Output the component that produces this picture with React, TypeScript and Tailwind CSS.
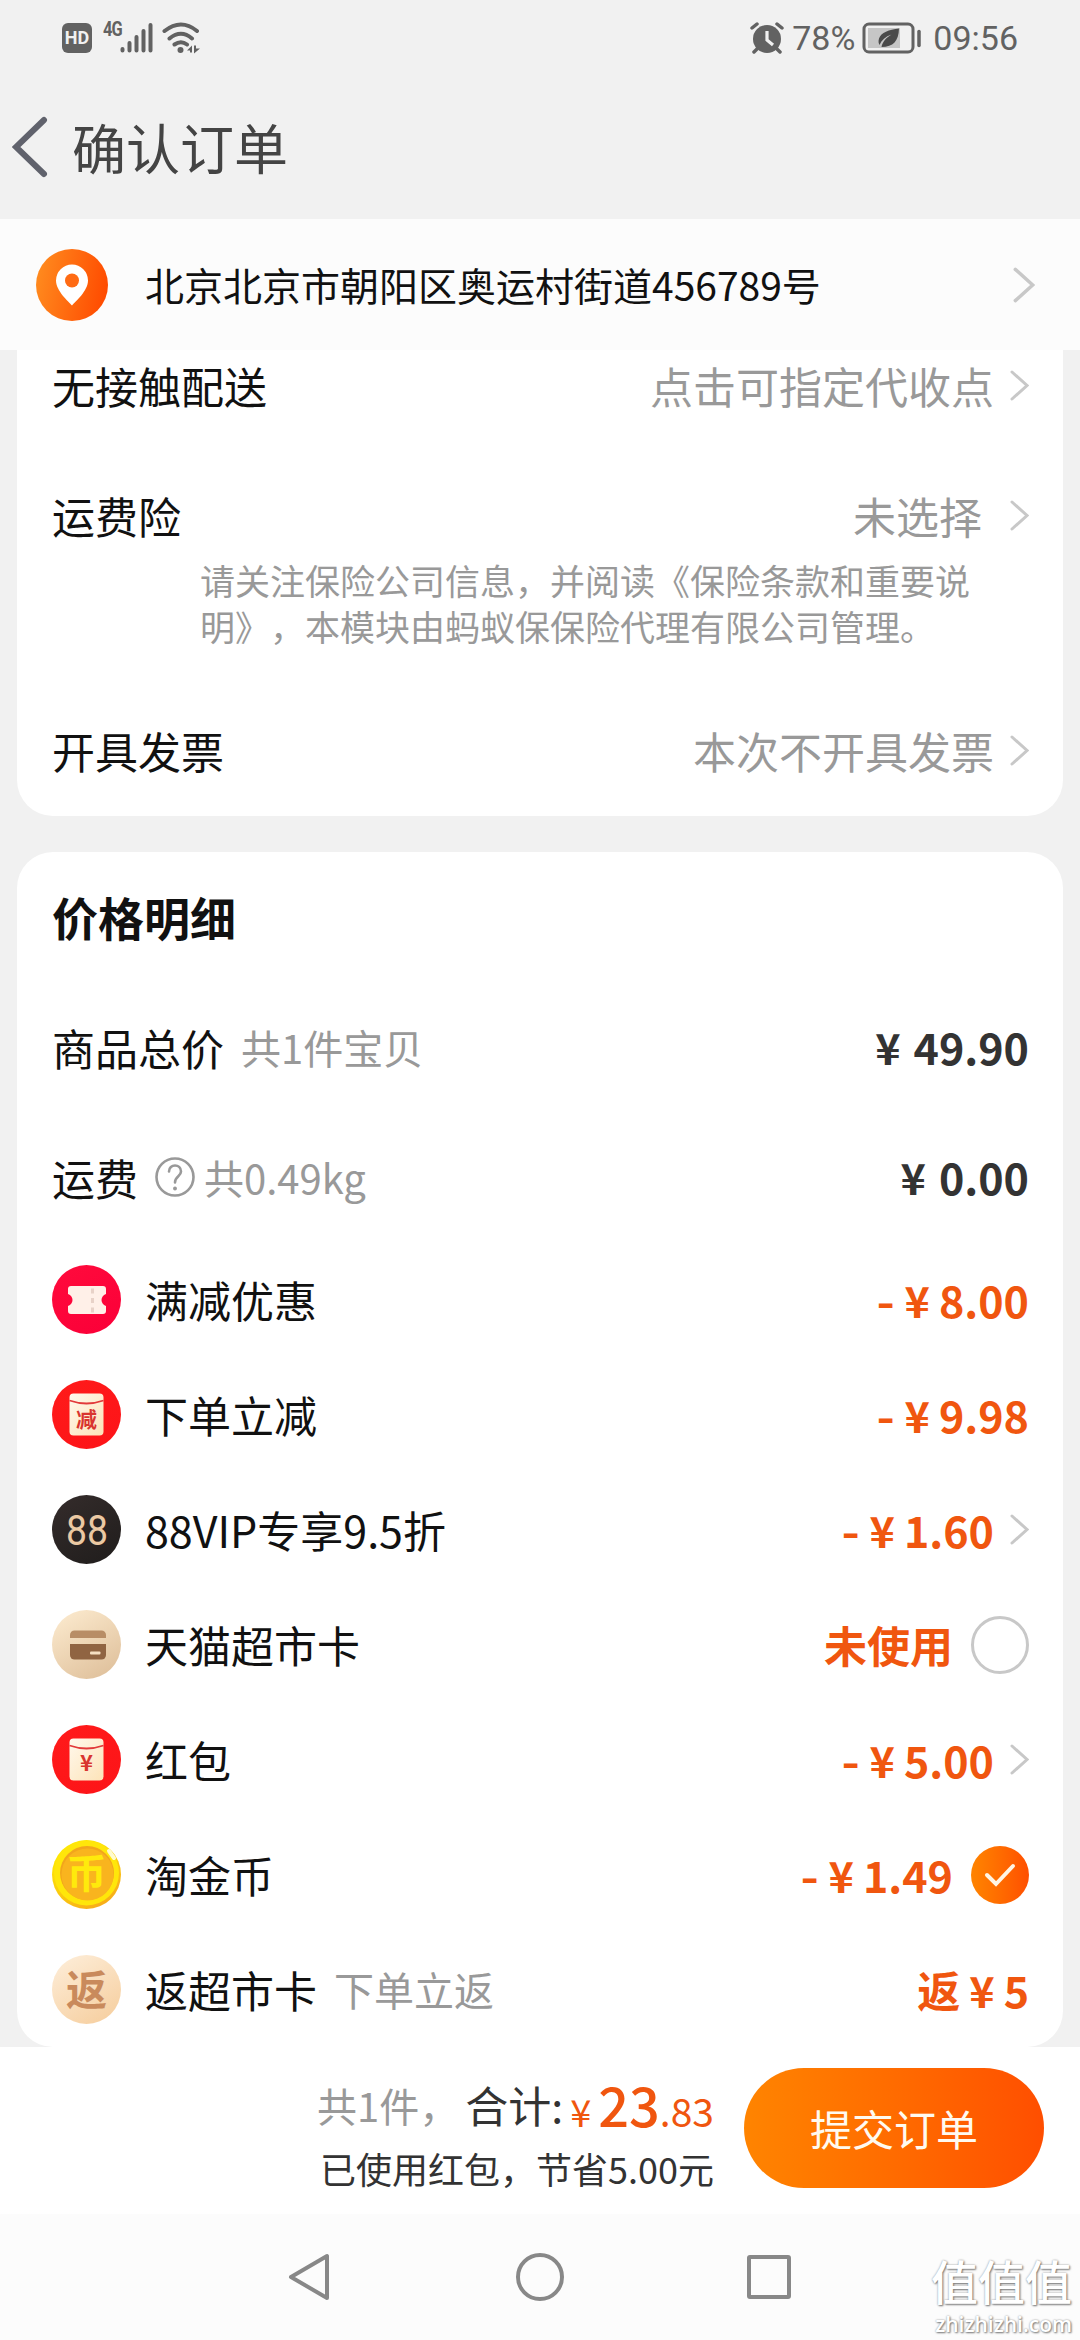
import type { ReactNode } from "react"

interface PriceRow {
  icon: ReactNode
  label: string
  note?: string
  prefix?: string
  amount?: string
  text?: string
  trailing?: "arrow" | "empty" | "checked"
}

function Arrow({ big }: { big?: boolean }) {
  return (
    <svg className={big ? "h-[36px] w-[22px]" : "h-[31px] w-[19px]"} viewBox="0 0 19 31" fill="none" stroke="#c8c8c8" strokeWidth="3" strokeLinecap="round">
      <path d="M2 2 L17 15.5 L2 29" strokeLinejoin="miter" />
    </svg>
  )
}

function Disc({ id, from, to, children }: { id: string; from: string; to: string; children: ReactNode }) {
  return (
    <svg className="h-[69px] w-[69px] shrink-0" viewBox="0 0 69 69">
      <defs>
        <linearGradient id={id} x1="0.2" y1="0" x2="0.8" y2="1">
          <stop offset="0" stopColor={from} />
          <stop offset="1" stopColor={to} />
        </linearGradient>
      </defs>
      <circle cx="34.5" cy="34.5" r="34.5" fill={`url(#${id})`} />
      {children}
    </svg>
  )
}

function CouponIcon() {
  return (
    <Disc id="coupon" from="#ff0a3c" to="#fb0038">
      <path d="M19 21H51a3 3 0 0 1 3 3v5c-6 2-6 10 0 12v5a3 3 0 0 1-3 3H19a3 3 0 0 1-3-3v-5c6-2 6-10 0-12v-5a3 3 0 0 1 3-3z" fill="#fff0e8" />
      <path d="M40.500 23.500v24" stroke="#e8d2c8" strokeWidth="3" strokeDasharray="5 4.500" />
    </Disc>
  )
}

function EnvelopeIcon({ id, mark, size, y }: { id: string; mark: string; size: number; y: number }) {
  return (
    <Disc id={id} from="#ff1a1a" to="#fd1418">
      <defs>
        <linearGradient id={`${id}-paper`} x1="0" y1="0" x2="1" y2="1">
          <stop offset="0" stopColor="#fff8ec" />
          <stop offset="1" stopColor="#fde3b8" />
        </linearGradient>
      </defs>
      <rect x="17.500" y="13.500" width="34" height="42" rx="4" fill={`url(#${id}-paper)`} />
      <path d="M17.500 20.500Q34.500 26.500 51.500 20.500" stroke="#e2393a" strokeWidth="1.800" fill="none" />
      <text x="34.500" y={y} fontSize={size} fontWeight="700" textAnchor="middle" fill="#d9352f">{mark}</text>
    </Disc>
  )
}

function VipIcon() {
  return (
    <Disc id="vip" from="#332b2a" to="#211e1d">
      <text x="35" y="49.500" fontSize="42" textAnchor="middle" textLength="42" lengthAdjust="spacingAndGlyphs" fill="#ebc9a3" className="font-['Roboto',sans-serif]">88</text>
    </Disc>
  )
}

function CardIcon() {
  return (
    <Disc id="card" from="#fbe9cd" to="#dfc09b">
      <path d="M18 28v-3a4.500 4.500 0 0 1 4.500-4.500h27a4.500 4.500 0 0 1 4.500 4.500v3z" fill="#b88d66" />
      <path d="M18 34h36v11a4.500 4.500 0 0 1-4.500 4.500h-27a4.500 4.500 0 0 1-4.500-4.500z" fill="#906442" />
      <rect x="38" y="41.500" width="10.500" height="3" rx="1" fill="#f6dfc2" />
    </Disc>
  )
}

function CoinIcon() {
  return (
    <Disc id="coin" from="#fff000" to="#f7a81c">
      <circle cx="34.500" cy="33" r="32.500" fill="#ffe60a" />
      <circle cx="35" cy="33" r="27" fill="#f2a51c" />
      <circle cx="35.500" cy="34.500" r="26" fill="#f9b41e" />
      <text x="34.500" y="48" fontSize="40" fontWeight="700" textAnchor="middle" fill="#ffea0c">币</text>
      <path d="M57 11l5 7" stroke="#fffbd0" strokeWidth="4" strokeLinecap="round" />
    </Disc>
  )
}

function RebateIcon() {
  return (
    <Disc id="rebate" from="#fdecd6" to="#f6cfa0">
      <text x="34.500" y="49.500" fontSize="41" fontWeight="700" textAnchor="middle" fill="#c98a5c">返</text>
    </Disc>
  )
}

const rows: PriceRow[] = [
  { icon: <CouponIcon />, label: "满减优惠", prefix: "-", amount: "8.00" },
  { icon: <EnvelopeIcon id="cut" mark="减" size={21} y={46.5} />, label: "下单立减", prefix: "-", amount: "9.98" },
  { icon: <VipIcon />, label: "88VIP专享9.5折", prefix: "-", amount: "1.60", trailing: "arrow" },
  { icon: <CardIcon />, label: "天猫超市卡", text: "未使用", trailing: "empty" },
  { icon: <EnvelopeIcon id="red" mark="¥" size={22} y={46} />, label: "红包", prefix: "-", amount: "5.00", trailing: "arrow" },
  { icon: <CoinIcon />, label: "淘金币", prefix: "-", amount: "1.49", trailing: "checked" },
  { icon: <RebateIcon />, label: "返超市卡", note: "下单立返", prefix: "返", amount: "5" },
]

function Amount({ prefix, value }: { prefix?: string; value: string }) {
  return (
    <span className="flex items-center pb-[1px] font-bold">
      {prefix && <span className={prefix === "-" ? "mr-[10px] origin-right scale-x-[1.15]" : "mr-[9px]"}>{prefix}</span>}
      <span className={prefix ? "mr-[9px]" : "mr-[13px]"}>¥</span>
      <span>{value}</span>
    </span>
  )
}

function Trailing({ kind }: { kind?: PriceRow["trailing"] }) {
  if (kind === "arrow") return <span className="ml-[16px] flex"><Arrow /></span>
  if (kind === "empty") return <span className="ml-[18px] h-[58px] w-[58px] rounded-full border-[3px] border-[#c8c8c8]" />
  if (kind === "checked")
    return (
      <span className="ml-[18px] flex h-[58px] w-[58px] items-center justify-center rounded-full bg-gradient-to-r from-[#ff8400] to-[#ff4e00]">
        <svg className="h-[24px] w-[32px]" viewBox="0 0 32 24" fill="none" stroke="#fff5e4" strokeWidth="4" strokeLinecap="round">
          <path d="M3 12l9 9L29 3" />
        </svg>
      </span>
    )
  return null
}

function OptionRow({ label, value, inset }: { label: string; value: string; inset?: boolean }) {
  return (
    <div className="flex h-[60px] items-center justify-between">
      <span>{label}</span>
      <span className="flex items-center text-[#999]">
        <span className={inset ? "mr-[28px]" : "mr-[16px]"}>{value}</span>
        <Arrow />
      </span>
    </div>
  )
}

function StatusBar() {
  return (
    <div className="flex h-[76px] items-center justify-between pl-[62px] pr-[62px] text-[#626262]">
      <div className="flex items-center">
        <span className="flex h-[30px] w-[30px] items-center justify-center rounded-[6px] bg-[#626262] font-['Roboto',sans-serif] text-[18px] font-bold leading-none text-[#f1f1f1]">HD</span>
        <span className="ml-[11px] w-[17px] origin-left scale-x-[0.82] self-start font-['Roboto',sans-serif] text-[20px] font-bold leading-[14px] tracking-[-1px]">4G</span>
        <svg className="h-[32px] w-[34px]" viewBox="0 0 34 32" stroke="#626262" strokeWidth="4" strokeLinecap="round">
          <path d="M2.500 27v1.500M9.500 21v7.500M16.500 15v13.500M23.500 9v19.500M30.500 3v25.500" />
        </svg>
        <svg className="ml-[8px] h-[32px] w-[40px]" viewBox="0 0 40 32" fill="none" stroke="#626262" strokeWidth="4" strokeLinecap="round">
          <path d="M2.500 9Q19 -4 35 9M7.500 16.500Q19 7 30 16.500M12.500 22.500Q19 18 25 22.500" />
          <circle cx="18.500" cy="28" r="3" fill="#626262" stroke="none" />
          <path d="M25 28.500l5-5v7h-2v-2zM32 31.500v-8h2v3h4z" fill="#626262" stroke="none" />
        </svg>
      </div>
      <div className="flex items-center font-['Roboto',sans-serif] text-[34px] leading-none">
        <svg className="h-[32px] w-[34px]" viewBox="0 0 34 32">
          <circle cx="17" cy="17" r="14" fill="#626262" />
          <path d="M2 6l5-4M32 6l-5-4M7 27l-3 3M27 27l3 3" stroke="#626262" strokeWidth="3.500" strokeLinecap="round" />
          <path d="M17 9v9l6 5" stroke="#f1f1f1" strokeWidth="3.200" fill="none" />
        </svg>
        <span className="ml-[8px]">78%</span>
        <svg className="ml-[7px] h-[32px] w-[60px]" viewBox="0 0 60 32">
          <rect x="2" y="2" width="49" height="28" rx="5" fill="none" stroke="#626262" strokeWidth="3" />
          <rect x="6" y="6" width="32" height="20" fill="#c6c6c6" />
          <path d="M37 6.500c-10 1-18 4-20 10-.8 3-.5 4.500.5 6.500 2-5 6-8.500 12-10.500-5 3-9 7-10 12.500 12 0 17-6 17.500-18.500z" fill="#4a4a4a" />
          <path d="M57 9.500v14" stroke="#626262" strokeWidth="3.500" strokeLinecap="round" />
        </svg>
        <span className="ml-[11px]">09:56</span>
      </div>
    </div>
  )
}

export default function App() {
  return (
    <div className="flex h-[2340px] w-[1080px] flex-col overflow-hidden bg-[#f1f1f1] font-['Noto_Sans_CJK_SC',sans-serif] text-[43px] leading-none text-[#111]">
      <header className="h-[219px]">
        <StatusBar />
        <div className="flex h-[142px] items-center pl-[12px]">
          <svg className="h-[62px] w-[36px]" viewBox="0 0 36 62" fill="none" stroke="#60626c" strokeWidth="6" strokeLinecap="round">
            <path d="M32 4L4 31l28 27" />
          </svg>
          <h1 className="ml-[24px] text-[54px] text-[#444]">确认订单</h1>
        </div>
      </header>

      <div className="flex h-[131px] items-center bg-[#fcfcfc] pl-[36px] pr-[45px]">
        <svg className="h-[72px] w-[72px]" viewBox="0 0 72 72">
          <defs>
            <linearGradient id="pin" x1="0" y1="0.400" x2="1" y2="0.600">
              <stop offset="0" stopColor="#ff8a1e" />
              <stop offset="1" stopColor="#ff4a00" />
            </linearGradient>
          </defs>
          <circle cx="36" cy="36" r="36" fill="url(#pin)" />
          <path d="M36 56.500C33 53 20 42 20 31.500a16 16 0 0 1 32 0C52 42 39 53 36 56.500z" fill="#fff" />
          <circle cx="36" cy="31.500" r="7" fill="#ff6b14" />
        </svg>
        <span className="ml-[37px] flex-1 text-[39px]">北京北京市朝阳区奥运村街道456789号</span>
        <Arrow big />
      </div>

      <section className="mx-[17px] h-[466px] rounded-b-[36px] bg-white pl-[35px] pr-[34px] pt-[5px]">
        <OptionRow label="无接触配送" value="点击可指定代收点" />
        <div className="mt-[70px]">
          <OptionRow label="运费险" value="未选择" inset />
          <p className="ml-[148px] mt-[12px] w-[780px] text-[35px] leading-[46px] text-[#999] [font-kerning:none] [text-spacing-trim:space-all]">
            请关注保险公司信息，并阅读《保险条款和重要说
            <br />
            明》，本模块由蚂蚁保保险代理有限公司管理。
          </p>
        </div>
        <div className="mt-[71px]">
          <OptionRow label="开具发票" value="本次不开具发票" />
        </div>
      </section>

      <section className="mx-[17px] mt-[36px] h-[1195px] rounded-[36px] bg-white pl-[35px] pr-[34px] pt-[34px]">
        <h2 className="flex h-[60px] items-center text-[46px] font-bold">价格明细</h2>
        <div className="mt-[71px] flex h-[60px] items-center">
          <span>商品总价</span>
          <span className="ml-[17px] flex-1 text-[40px] text-[#999]">共1件宝贝</span>
          <span className="text-[#333]"><Amount value="49.90" /></span>
        </div>
        <div className="mt-[70px] flex h-[60px] items-center">
          <span>运费</span>
          <svg className="ml-[17px] h-[40px] w-[40px]" viewBox="0 0 40 40" fill="none" stroke="#999" strokeWidth="2.600" strokeLinecap="round">
            <circle cx="20" cy="20" r="18.500" />
            <path d="M14 14.500c0-8 12-8 12 0 0 5-6 4.500-6 11" />
            <circle cx="20" cy="31.500" r="1.200" fill="#999" strokeWidth="1.500" />
          </svg>
          <span className="ml-[9px] flex-1 text-[40px] text-[#999]">共0.49kg</span>
          <span className="text-[#333]"><Amount value="0.00" /></span>
        </div>
        <ul className="mt-[35px]">
          {rows.map((row) => (
            <li key={row.label} className="flex h-[115px] items-center">
              {row.icon}
              <span className="ml-[24px] pb-[1px]">{row.label}</span>
              {row.note && <span className="ml-[17px] pb-[1px] text-[40px] text-[#999]">{row.note}</span>}
              <span className="ml-auto flex items-center text-[#f0560f]">
                {row.amount ? <Amount prefix={row.prefix} value={row.amount} /> : <span className="pb-[1px] font-bold">{row.text}</span>}
                <Trailing kind={row.trailing} />
              </span>
            </li>
          ))}
        </ul>
      </section>

      <footer className="flex h-[167px] items-start justify-end bg-white pr-[36px] pt-[21px]">
        <div className="mr-[30px] flex flex-col items-end">
          <div className="flex h-[72px] items-baseline whitespace-nowrap leading-[72px] text-[#333]">
            <span className="-translate-y-[5px] text-[40px] text-[#999]">共1件，</span>
            <span className="ml-[6px] -translate-y-[4px] text-[43px]">合计:</span>
            <span className="ml-[7px] text-[38px] text-[#f0560f]">¥</span>
            <span className="ml-[7px] text-[54px] font-medium text-[#f0560f]">23</span>
            <span className="text-[39px] text-[#f0560f]">.83</span>
          </div>
          <p className="mt-[10px] text-[36px] text-[#333]">已使用红包，节省5.00元</p>
        </div>
        <button className="h-[120px] w-[300px] rounded-full bg-gradient-to-r from-[#ff8400] to-[#ff4e00] text-[42px] text-[#fffaf0]">提交订单</button>
      </footer>

      <nav className="relative flex h-[126px] items-center bg-[#fcfcfc] pl-[287px]">
        <svg className="h-[50px] w-[44px]" viewBox="0 0 44 50" fill="none" stroke="#888" strokeWidth="4" strokeLinejoin="round">
          <path d="M4 25L40 4v42z" />
        </svg>
        <span className="ml-[185px] h-[48px] w-[48px] rounded-full border-[4px] border-[#888]" />
        <span className="ml-[183px] h-[44px] w-[44px] rounded-[3px] border-[4px] border-[#888]" />
        <div className="absolute right-[8px] top-[36px] text-right text-white [text-shadow:1px_1px_2px_#777,0_0_2px_#999]">
          <div className="text-[47px] font-medium leading-[60px]">值值值</div>
          <div className="font-['Open_Sans',sans-serif] text-[21px] font-semibold leading-[28px]">zhizhizhi.com</div>
        </div>
      </nav>
    </div>
  )
}
